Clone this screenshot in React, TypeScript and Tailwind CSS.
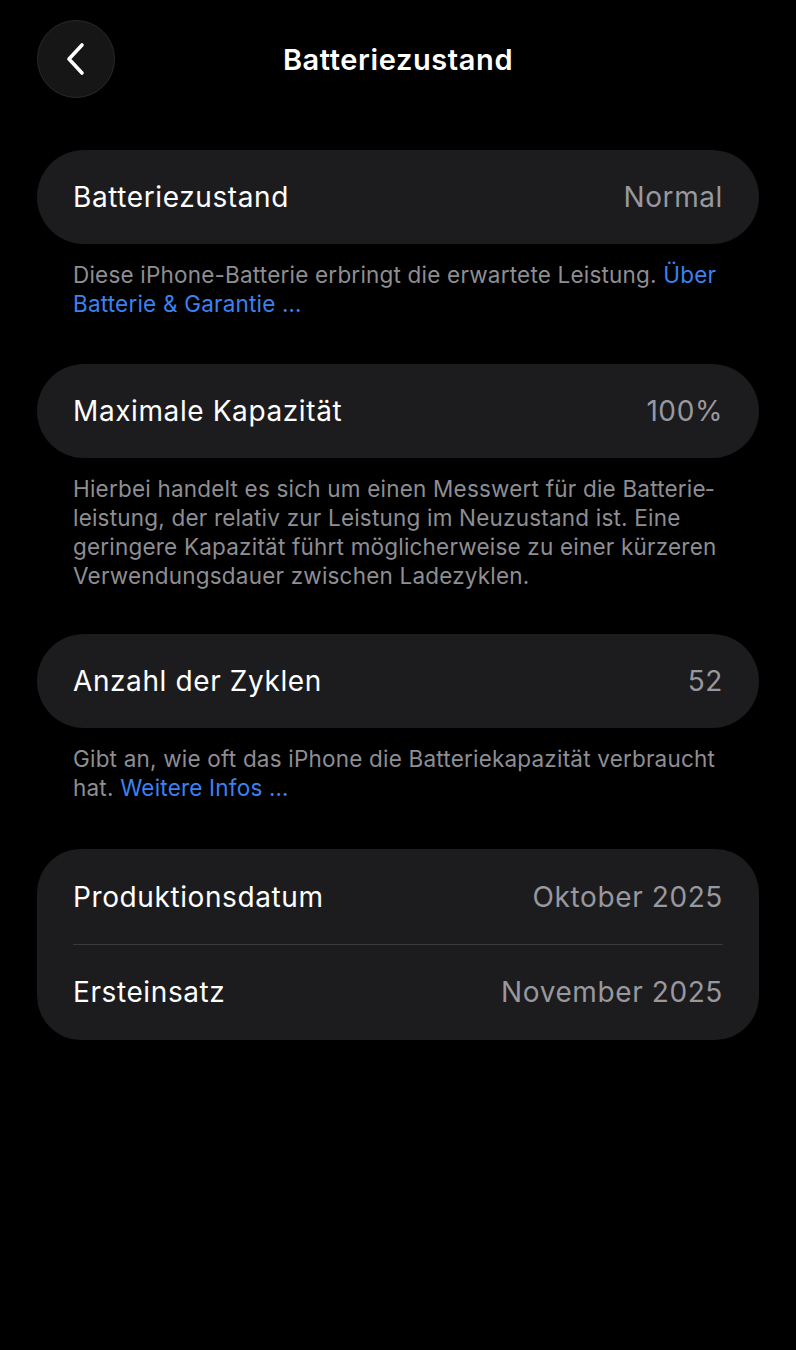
import type { ReactNode } from "react";

const font = { fontFamily: "Inter, 'Noto Sans', sans-serif" };

function Card({ children }: { children: ReactNode }) {
  return <div className="rounded-[47px] bg-[#1c1c1e] px-9">{children}</div>;
}

function Row({ label, value }: { label: string; value: string }) {
  return (
    <div className="flex h-[94px] items-center justify-between text-[28px] tracking-[0.6px]">
      <span className="text-white">{label}</span>
      <span className="text-[#98989e]">{value}</span>
    </div>
  );
}

function Note({ children }: { children: ReactNode }) {
  return (
    <p className="mt-[16px] pl-9 pr-8 text-[22.5px] leading-[29px] tracking-[0.2px] text-[#8e8e93]">{children}</p>
  );
}

export default function App() {
  return (
    <div className="min-h-[1350px] w-[796px] bg-black" style={font}>
      <header className="relative flex h-[120px] items-center justify-center">
        <button className="absolute left-[37px] top-[20px] flex h-[78px] w-[78px] items-center justify-center rounded-full border border-[#2a2a2c] bg-[#161617]">
          <svg width="30" height="40" viewBox="0 0 30 40" fill="none">
            <path d="M21 6 L8 20 L21 34" stroke="white" strokeWidth="3.6" strokeLinecap="round" strokeLinejoin="round" />
          </svg>
        </button>
        <h1 className="text-[29px] font-semibold tracking-[0.6px] text-white">Batteriezustand</h1>
      </header>

      <main className="px-[37px] pt-[30px]">
        <section>
          <Card>
            <Row label="Batteriezustand" value="Normal" />
          </Card>
          <Note>
            Diese iPhone-Batterie erbringt die erwartete Leistung.{" "}
            <span className="text-[#3b82f0]">Über Batterie &amp; Garantie …</span>
          </Note>
        </section>

        <section className="mt-[46px]">
          <Card>
            <Row label="Maximale Kapazität" value="100%" />
          </Card>
          <Note>
            Hierbei handelt es sich um einen Messwert für die Batterie­leistung, der relativ zur Leistung im Neuzustand
            ist. Eine geringere Kapazität führt möglicherweise zu einer kürzeren Verwendungsdauer zwischen Ladezyklen.
          </Note>
        </section>

        <section className="mt-[44px]">
          <Card>
            <Row label="Anzahl der Zyklen" value="52" />
          </Card>
          <Note>
            Gibt an, wie oft das iPhone die Batteriekapazität verbraucht hat.{" "}
            <span className="text-[#3b82f0]">Weitere Infos …</span>
          </Note>
        </section>

        <section className="mt-[47px]">
          <div className="rounded-[44px] bg-[#1c1c1e] px-9 py-[1px]">
            <Row label="Produktionsdatum" value="Oktober 2025" />
            <div className="h-px bg-[#3a3a3c]" />
            <Row label="Ersteinsatz" value="November 2025" />
          </div>
        </section>
      </main>
    </div>
  );
}
